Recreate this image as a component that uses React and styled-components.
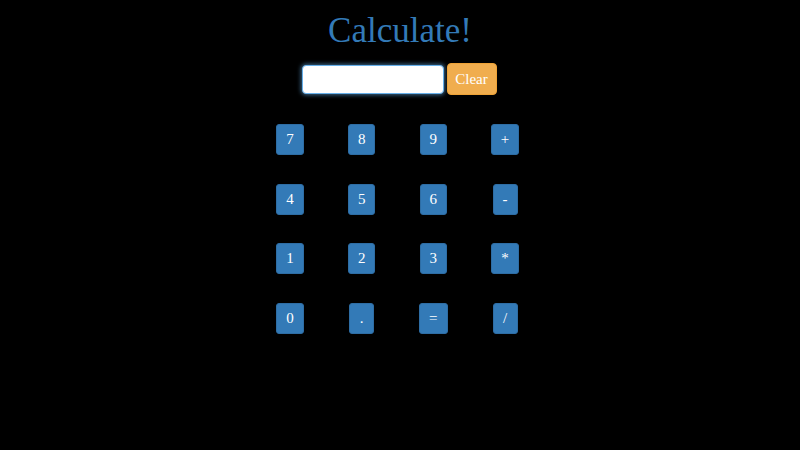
import styled, { createGlobalStyle } from "styled-components";

const GlobalStyle = createGlobalStyle`
  html, body {
    margin: 0;
    padding: 0;
    background: #000;
  }
  body {
    width: 800px;
    height: 450px;
    font-family: "Liberation Serif", "Times New Roman", serif;
  }
`;

const Page = styled.div`
  display: flex;
  flex-direction: column;
  align-items: center;
  padding-top: 10px;
`;

const Title = styled.h1`
  margin: 0;
  font-size: 35px;
  font-weight: normal;
  line-height: 42px;
  color: #337ab7;
`;

const InputRow = styled.div`
  display: flex;
  align-items: center;
  gap: 3px;
  margin-top: 11px;
  margin-right: 2px;
`;

const Display = styled.input`
  box-sizing: border-box;
  width: 142px;
  height: 29px;
  border: 1px solid #66afe9;
  border-radius: 4px;
  background: #fff;
  box-shadow: 0 0 4px 1px rgba(102, 175, 233, 0.6);
  outline: none;
  font-family: "Liberation Serif", serif;
  font-size: 15px;
`;

const ClearButton = styled.button`
  box-sizing: border-box;
  width: 50px;
  height: 32px;
  border: 1px solid #eea236;
  border-radius: 4px;
  background: #f0ad4e;
  color: #fff;
  font-family: "Liberation Serif", serif;
  font-size: 15px;
  padding: 0;
`;

const Keypad = styled.div`
  display: grid;
  grid-template-columns: repeat(4, 71.7px);
  grid-auto-rows: 31px;
  row-gap: 28.5px;
  justify-items: center;
  margin-top: 29px;
  margin-right: 5px;
`;

const Key = styled.button`
  box-sizing: border-box;
  height: 31px;
  padding: 0 9px;
  border: 1px solid #2e6da4;
  border-radius: 3px;
  background: #337ab7;
  color: #fff;
  font-family: "Liberation Serif", serif;
  font-size: 15px;
  line-height: 29px;
  min-width: 25px;
`;

const keys = ["7", "8", "9", "+", "4", "5", "6", "-", "1", "2", "3", "*", "0", ".", "=", "/"];

export default function App() {
  return (
    <>
      <GlobalStyle />
      <Page>
        <Title>Calculate!</Title>
        <InputRow>
          <Display type="text" />
          <ClearButton>Clear</ClearButton>
        </InputRow>
        <Keypad>
          {keys.map((k) => (
            <Key key={k}>{k}</Key>
          ))}
        </Keypad>
      </Page>
    </>
  );
}
